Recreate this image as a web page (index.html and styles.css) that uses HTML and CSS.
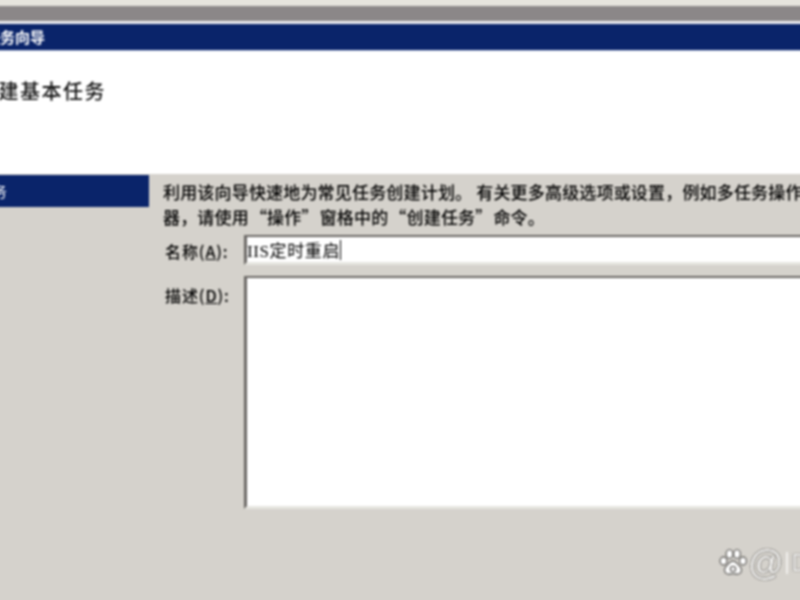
FILE: index.html
```html
<!DOCTYPE html>
<html lang="zh-CN">
<head>
    <meta charset="UTF-8">
    <title>创建基本任务向导</title>
    <link rel="stylesheet" href="styles.css">
</head>
<body>
    <div class="screen">
        <div class="top-strip"></div>
        <div class="grey-bar"></div>
        <div class="title-bar"><span class="title-text">创建基本任务向导</span></div>

        <!-- 页眉 -->
        <div class="header"><h1>创建基本任务</h1></div>

        <div class="content">
            <div class="sidebar">
                <div class="step active"><span>创建基本任务</span></div>
            </div>

            <div class="main">
                <div class="intro">
                    <div>利用该向导快速地为常见任务创建计划。 有关更多高级选项或设置，例如多任务操作或触发</div>
                    <div class="second">器，请使用 “操作” 窗格中的 “创建任务” 命令。</div>
                </div>

                <div class="field name-field">
                    <label>名称(<u>A</u>):</label>
                    <div class="input name-input"><span class="value">IIS定时重启</span><span class="caret"></span></div>
                </div>
                <div class="field desc-field">
                    <label>描述(<u>D</u>):</label>
                    <div class="input desc-input"></div>
                </div>
            </div>
        </div>

        <!-- 水印 -->
        <div class="watermark">
            <svg class="paw" viewBox="0 0 28 30" width="28" height="30">
                <g fill="#fff" stroke="#6f6d6a" stroke-width="1.4">
                    <ellipse cx="4.5" cy="13" rx="3.4" ry="4"/>
                    <ellipse cx="10.5" cy="6" rx="3.4" ry="4.4"/>
                    <ellipse cx="18" cy="6" rx="3.4" ry="4.4"/>
                    <ellipse cx="24" cy="13" rx="3.4" ry="4"/>
                    <path d="M14 13c-3 0-4.500 3-6.500 5-2 2-2.500 4-1.500 6 1 2 3.500 2.500 5 2 2-.5 4-.5 6 0 1.500.5 4 0 5-2 1-2 .5-4-1.500-6-2-2-3.500-5-6.500-5z"/>
                </g>
                <circle cx="14" cy="21" r="2.600" fill="none" stroke="#6f6d6a" stroke-width="1.400"/>
            </svg>
            <span class="at">@</span>
            <span class="sep"></span>
            <span class="cut">D</span>
        </div>
    </div>
</body>
</html>
```

FILE: styles.css
```css
html, body {
    margin: 0;
    padding: 0;
    overflow: hidden;
    background-color: #d5d2cc;
}

/* 比窗口多出 4px，模糊时边缘不会变淡 */
.screen {
    position: relative;
    width: 808px;
    height: 608px;
    margin: -4px 0 0 -4px;
    overflow: hidden;
    display: flex;
    flex-direction: column;
    font-family: "Noto Sans CJK SC", "Liberation Sans", sans-serif;
    color: #000;
    filter: blur(0.85px);
}

.top-strip {
    height: 10px;
    background-color: #e6e4dd;
}

.grey-bar {
    height: 15px;
    background-color: #8b8788;
    border-bottom: 3px solid #eeeef2;
}

.title-bar {
    height: 26px;
    line-height: 25px;
    background-color: #0a246a;
    border-bottom: 1px solid #b9c4de;
    color: #fff;
    font-size: 15px;
    font-weight: bold;
    white-space: nowrap;
}

.title-text {
    margin-left: -71px;
}

.header {
    height: 123px;
    background-color: #fff;
}

.header h1 {
    margin: 25px 0 0 -19px;
    font-size: 20px;
    font-weight: 500;
    line-height: 30px;
    letter-spacing: 1.5px;
    white-space: nowrap;
    color: #111;
}

.content {
    flex: 1;
    display: flex;
}

.sidebar {
    width: 154px;
    flex-shrink: 0;
}

.step {
    height: 32px;
    line-height: 32px;
    margin-top: 1px;
    font-size: 15px;
    white-space: nowrap;
}

.step.active {
    background-color: #0a246a;
    color: #fff;
    margin-right: 1px;
}

.step span {
    margin-left: -79px;
}

.main {
    flex: 1;
    min-width: 0;
    padding-left: 13px;
}

.intro {
    margin-top: 5px;
    font-size: 17px;
    font-weight: 500;
    line-height: 25px;
    letter-spacing: 0.18px;
    white-space: nowrap;
}

.intro .second {
    word-spacing: -3px;
}

.field {
    display: flex;
}

.field label {
    width: 79px;
    padding-left: 2px;
    flex-shrink: 0;
    font-size: 16px;
    font-weight: 500;
    letter-spacing: 0.9px;
    white-space: nowrap;
}

.name-field {
    margin-top: 6px;
}

.name-field label {
    line-height: 32px;
}

.desc-field {
    margin-top: 9px;
}

.desc-field label {
    line-height: 38px;
}

.input {
    flex: 1;
    background-color: #fff;
    border-top: 2px solid #6a6764;
    border-left: 3px solid #6a6764;
    border-bottom: 3px solid #e6e5e0;
}

.name-input {
    height: 25px;
    display: flex;
    align-items: center;
    font-family: "Liberation Serif", "Noto Sans CJK SC", serif;
    font-size: 17px;
    letter-spacing: 0.6px;
}

.value {
    white-space: nowrap;
}

.caret {
    width: 1px;
    height: 20px;
    background-color: #000;
}

.desc-input {
    height: 228px;
}

/* 右下角水印 */
.watermark {
    position: absolute;
    left: 723px;
    top: 552px;
    display: flex;
    align-items: center;
    gap: 1px;
    white-space: nowrap;
}

.at {
    font-family: "Liberation Sans", sans-serif;
    font-size: 35px;
    line-height: 30px;
    color: #f4f3f1;
    text-shadow: 0 0 1px #3f3d3a, 0 0 1px #3f3d3a, 0 0 1px #3f3d3a;
}

.sep {
    width: 2px;
    height: 22px;
    margin-left: 1px;
    background-color: #f2f1ee;
}

.cut {
    margin-left: 3px;
    font-family: "Liberation Sans", sans-serif;
    font-size: 24px;
    line-height: 30px;
    color: #f4f3f1;
    text-shadow: 0 0 1px #3f3d3a, 0 0 1px #3f3d3a;
}
```
